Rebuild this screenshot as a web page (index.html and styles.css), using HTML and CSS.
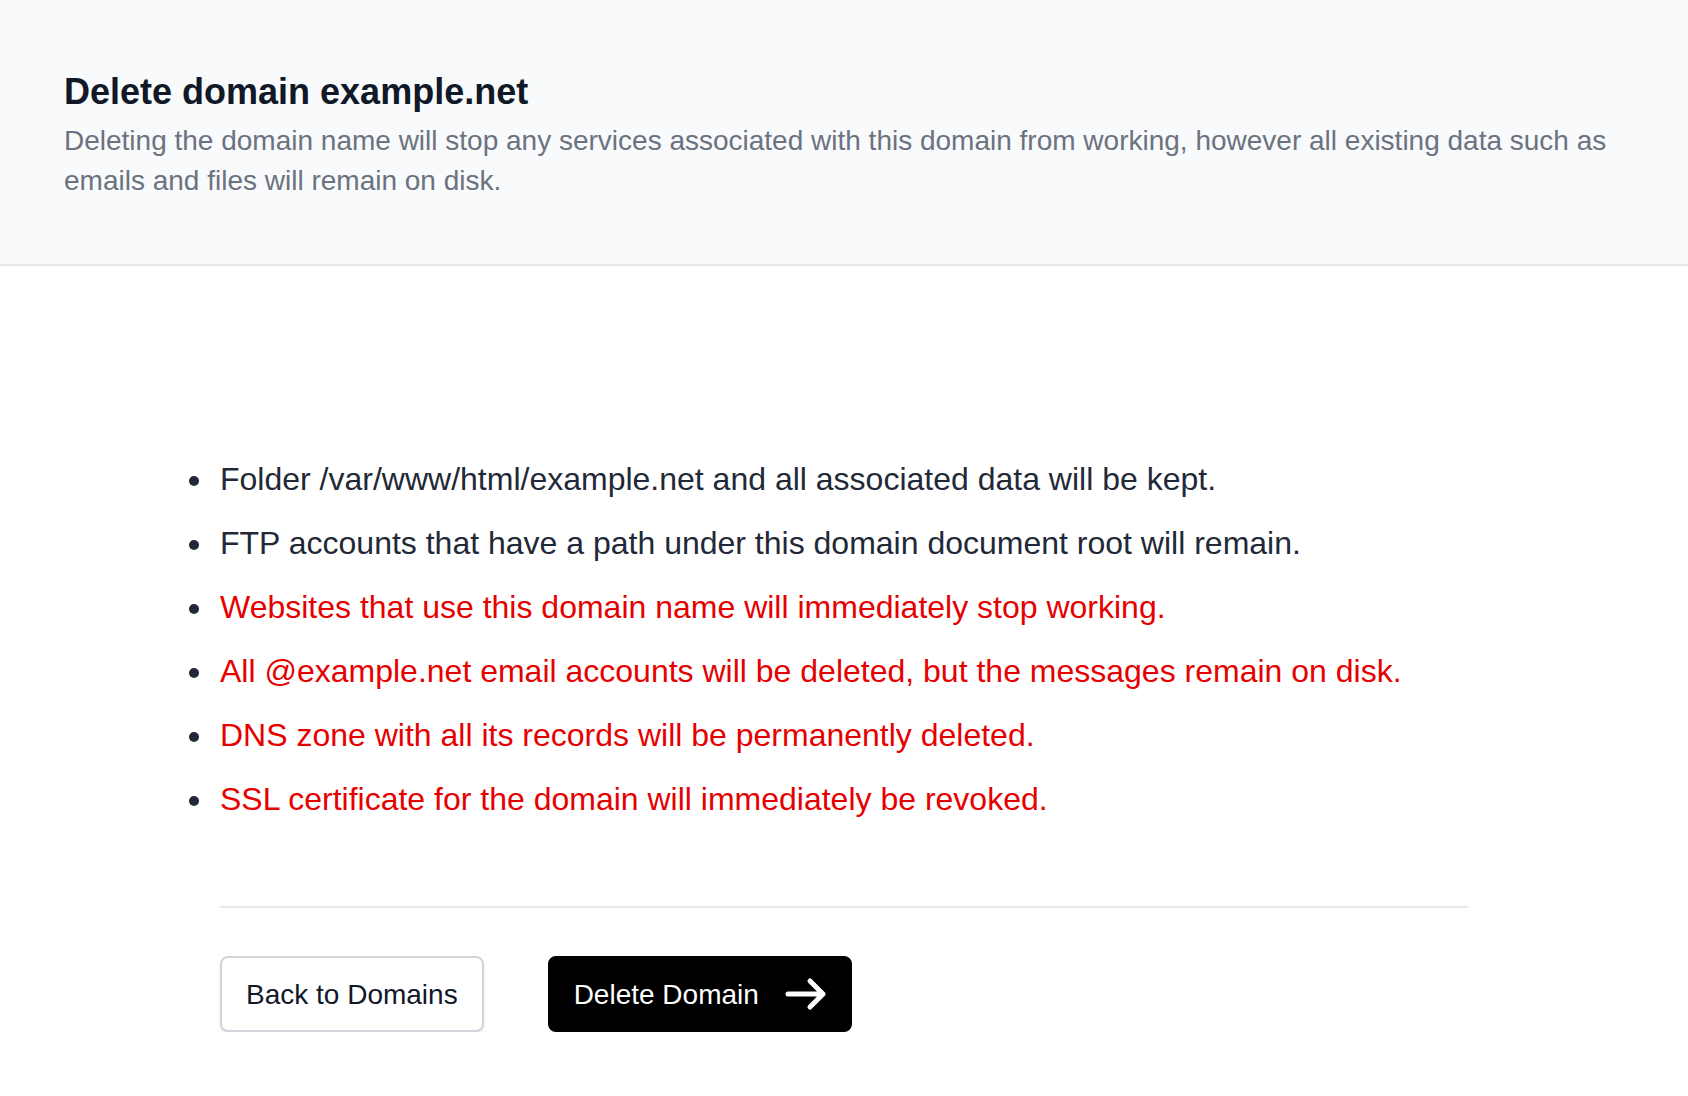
FILE: index.html
```html
<!DOCTYPE html>
<html lang="en">

<head>
  <meta charset="UTF-8">
  <meta name="viewport" content="width=device-width, initial-scale=1.0">
  <title>Delete domain example.net</title>
  <link rel="stylesheet" href="styles.css">
</head>

<body>
  <header class="pageHeader">
    <h1 class="pageTitle">Delete domain example.net</h1>
    <p class="pageDesc">
      Deleting the domain name will stop any services associated with this domain from working, however all existing
      data such as emails and files will remain on disk.
    </p>
  </header>

  <main class="content">
    <ul class="notes">
      <li>Folder /var/www/html/example.net and all associated data will be kept.</li>
      <li>FTP accounts that have a path under this domain document root will remain.</li>
      <li><span class="danger">Websites that use this domain name will immediately stop working.</span></li>
      <li><span class="danger">All @example.net email accounts will be deleted, but the messages remain on disk.</span></li>
      <li><span class="danger">DNS zone with all its records will be permanently deleted.</span></li>
      <li><span class="danger">SSL certificate for the domain will immediately be revoked.</span></li>
    </ul>

    <hr class="divider">

    <div class="actions">
      <a class="btn btnBack" href="#">Back to Domains</a>
      <button class="btn btnDelete" type="button">
        Delete Domain
        <svg class="arrow" width="42" height="34" viewBox="0 0 42 34" fill="none" stroke="currentColor"
          stroke-width="5" stroke-linecap="round" stroke-linejoin="round">
          <path d="M3 17h35M25 4l13 13-13 13" />
        </svg>
      </button>
    </div>
  </main>
</body>

</html>
```

FILE: styles.css
```css
* {
  margin: 0;
  padding: 0;
  box-sizing: border-box;
}
body {
  font-family: "Liberation Sans", Arial, sans-serif;
  background: #fff;
  color: #111827;
}
.pageHeader {
  background: #f9fafb;
  border-bottom: 2px solid #e5e7eb;
  padding: 64px 64px 63px;
}
.pageTitle {
  font-size: 36px;
  line-height: 56px;
  font-weight: 700;
  color: #111827;
}
.pageDesc {
  margin-top: 1px;
  font-size: 28px;
  line-height: 40px;
  color: #6b7280;
}
.content {
  padding: 189px 220px 0;
}
.notes {
  list-style: disc;
  font-size: 32px;
  line-height: 48px;
  color: #1f2937;
  margin-left: -5px;
}
.notes li {
  padding-left: 5px;
}
.notes li + li {
  margin-top: 16px;
}
.danger {
  color: #e60000;
}
.divider {
  border: 0;
  border-top: 2px solid #e5e7eb;
  margin-top: 83px;
}
.actions {
  display: flex;
  gap: 64px;
  margin-top: 48px;
}
.btn {
  display: inline-flex;
  align-items: center;
  font-family: inherit;
  font-size: 28px;
  line-height: 40px;
  padding: 17px 24px 15px;
  border: 2px solid #d1d5db;
  border-radius: 8px;
  text-decoration: none;
  cursor: pointer;
}
.btnBack {
  background: #fff;
  color: #111827;
  box-shadow: 0 2px 3px rgba(0, 0, 0, 0.08);
}
.btnDelete {
  background: #000;
  border-color: #000;
  color: #fff;
  gap: 26px;
  padding-right: 23px;
}
.arrow {
  display: block;
  margin-top: -2px;
}
```
